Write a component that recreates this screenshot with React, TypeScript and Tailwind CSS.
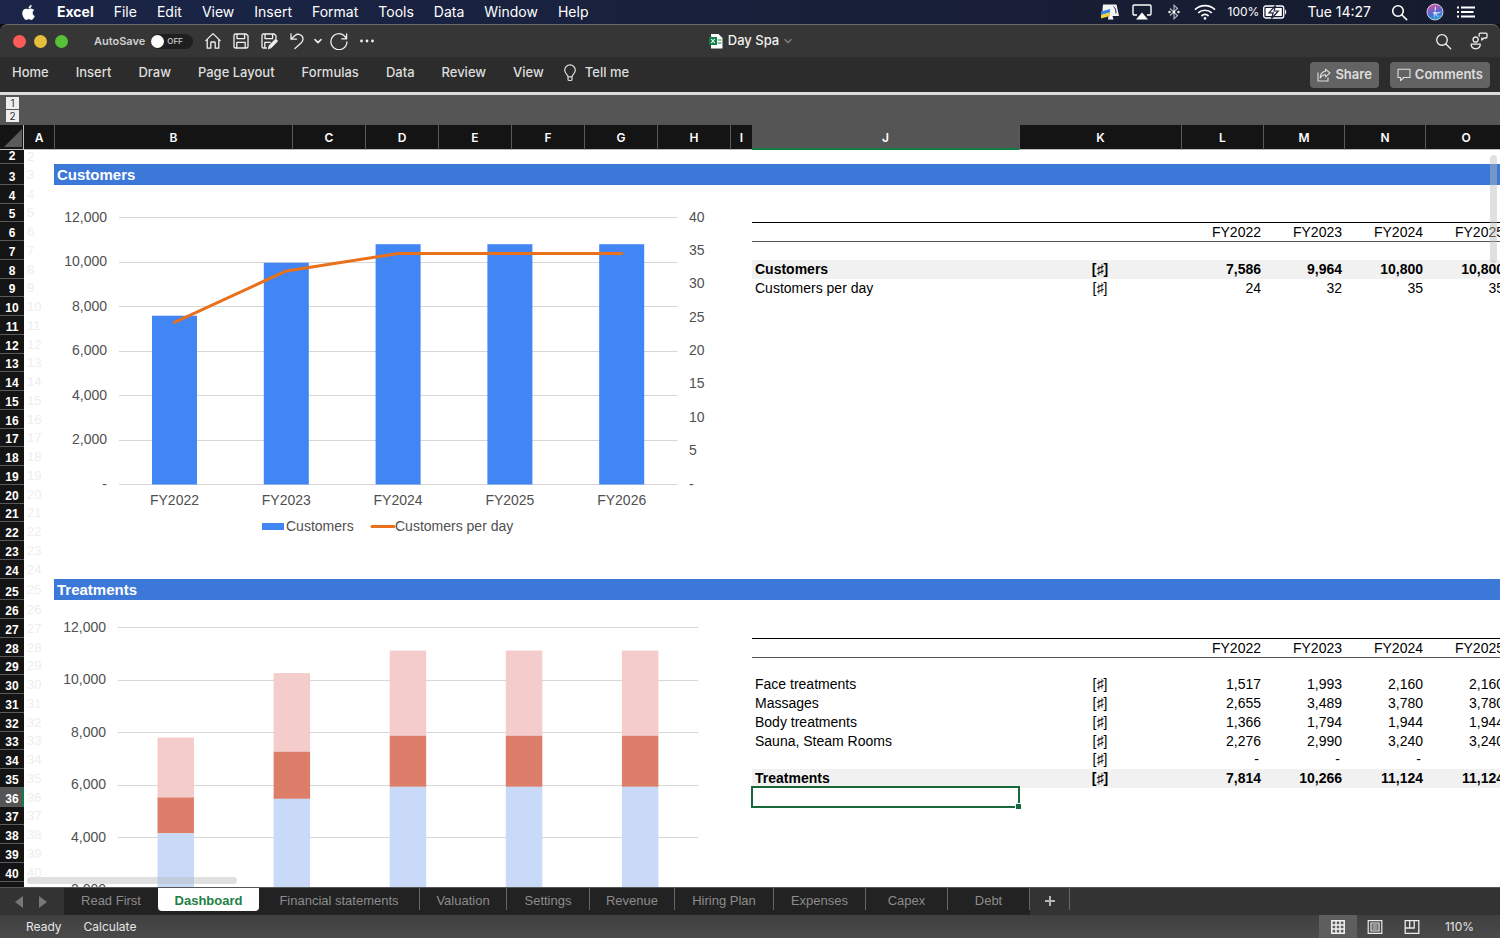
import { Fragment, type ReactNode } from "react";
import { FaApple } from "react-icons/fa";

const ui = "font-['Inter','Liberation_Sans',sans-serif]";

/* ---------- icons ---------- */

function Line({ children, className, size = 18, w = 1.3 }: { children: ReactNode; className?: string; size?: number; w?: number }) {
  return (
    <svg
      width={size}
      height={size}
      viewBox="0 0 18 18"
      fill="none"
      stroke="currentColor"
      strokeWidth={w}
      strokeLinecap="round"
      strokeLinejoin="round"
      className={className}
      aria-hidden="true"
    >
      {children}
    </svg>
  );
}

const HomeIcon = () => (
  <Line>
    <path d="M1.8 8.6 9 1.6l7.2 7M3.2 7.4v8.8h3.6v-5.4c0-.5.3-.8.8-.8h2.8c.5 0 .8.3.8.8v5.4h3.6V7.4" />
  </Line>
);
const SaveIcon = () => (
  <Line>
    <path d="M2 3.4C2 2.6 2.6 2 3.4 2h10.8L16 3.8v10.8c0 .8-.6 1.4-1.4 1.4H3.4c-.8 0-1.4-.6-1.4-1.4zM5 2v4.6h7.6V2M4.8 16v-5.6h8.4V16" />
  </Line>
);
const SaveEditIcon = () => (
  <Line>
    <path d="M6.4 16h-3C2.6 16 2 15.4 2 14.600V3.400C2 2.600 2.600 2 3.400 2h10.800L16 3.800V6.500M5 2v4.600h7.600V2M4.800 16v-5.600h5.400" />
    <path d="M8.400 16.600l.8-3.200 5.600-5.600c1.600-1.200 3.200.6 2.200 2l-5.600 5.800z" fill="currentColor" strokeWidth={0.8} />
  </Line>
);
const UndoIcon = () => (
  <Line>
    <path d="M3 1.800v5.400h5.400M3.300 6.900 7 3.500c3.200-2.600 8-.6 8 3.400 0 1.500-.6 2.700-1.700 3.800L7 16.500" />
  </Line>
);
const RedoIcon = () => (
  <Line>
    <path d="M16.600 2v4.800h-4.800M16.200 6.400a8 8 0 1 0 .7 3.600" />
  </Line>
);
const SearchIcon = ({ w = 1.4 }: { w?: number }) => (
  <Line size={17} w={w}>
    <circle cx="7.400" cy="7.400" r="5.600" />
    <path d="m11.600 11.600 5 5" />
  </Line>
);
const DotsIcon = () => (
  <svg width="18" height="18" viewBox="0 0 18 18" fill="currentColor" aria-hidden="true">
    <circle cx="3.500" cy="9" r="1.400" />
    <circle cx="9" cy="9" r="1.400" />
    <circle cx="14.500" cy="9" r="1.400" />
  </svg>
);
const Chevron = () => (
  <svg width="8" height="8" viewBox="0 0 8 8" fill="none" stroke="currentColor" strokeWidth="1.500" strokeLinecap="round" strokeLinejoin="round" aria-hidden="true">
    <path d="m1 2.600 3 3 3-3" />
  </svg>
);
const PeopleIcon = () => (
  <Line>
    <circle cx="5.600" cy="7.600" r="2.600" />
    <path d="M1.200 12.200h9c.3 2.800-1.500 4.600-4.500 4.600s-4.700-1.800-4.500-4.600zM9.200 4.200V2.200c0-.6.400-1 1-1h5.800c.6 0 1 .4 1 1v2.800c0 .6-.4 1-1 1h-1.800l-2.400 2V6" />
  </Line>
);
const BulbIcon = () => (
  <svg width="14" height="18" viewBox="0 0 14 18" fill="none" stroke="currentColor" strokeWidth="1.200" aria-hidden="true">
    <path d="M5 12.800c0-2-3.300-3.200-3.300-6.600a5.300 5.300 0 0 1 10.600 0c0 3.400-3.300 4.600-3.300 6.600zM5 12.800v2.400c0 .8.500 1.300 1.200 1.300h1.600c.7 0 1.200-.5 1.200-1.300v-2.400" />
  </svg>
);
const ShareIcon = () => (
  <svg width="14" height="14" viewBox="0 0 14 14" fill="none" stroke="currentColor" strokeWidth="1.100" strokeLinejoin="round" aria-hidden="true">
    <path d="M1 4.500V13h10V9.500" />
    <path d="M8.500 1.200 13 5 8.500 8.800V6.800C6.300 6.600 4.500 7.600 3.200 10c0-3.600 1.800-6.200 5.300-6.700z" />
  </svg>
);
const CommentIcon = () => (
  <svg width="14" height="14" viewBox="0 0 14 14" fill="none" stroke="currentColor" strokeWidth="1.100" strokeLinejoin="round" aria-hidden="true">
    <path d="M1 1.200h12v8.300H6.800L3.600 12.700V9.500H1z" />
  </svg>
);
const WorkbookIcon = () => (
  <svg width="14" height="16" viewBox="0 0 14 16" aria-hidden="true">
    <path d="M2 1h7.500L13.500 5v10.500H2z" fill="#fff" />
    <path d="M8.500 7h4M8.500 10h4" stroke="#1d8a4c" strokeWidth="1.200" />
    <rect x="0" y="4" width="8" height="8" fill="#16804a" />
    <path d="m2.300 6 3.400 4M5.700 6 2.300 10" stroke="#fff" strokeWidth="1.100" />
  </svg>
);
const MonitorIcon = () => (
  <svg width="20" height="18" viewBox="0 0 20 18" aria-hidden="true">
    <path d="M3 1.500h13.500l2.500 11.500h-6.500l1 3.500H8l.5-3.500H2z" fill="#f5f5f5" />
    <path d="M1 8.500 10 6v3.500L1 12z" fill="#3b82e0" />
    <path d="M1 12l9-2.500V13l-9 2.500z" fill="#f2cf3c" />
    <path d="M13.500 3.500c2 1.500 2.500 4 2.500 7" stroke="#1a203a" strokeWidth="1" fill="none" />
  </svg>
);
const AirplayIcon = () => (
  <svg width="20" height="16" viewBox="0 0 20 16" aria-hidden="true">
    <path d="M5 11H2.200C1.500 11 1 10.500 1 9.800V2.200C1 1.500 1.500 1 2.200 1h15.600c.7 0 1.200.5 1.200 1.200v7.600c0 .7-.5 1.200-1.200 1.200H15" fill="none" stroke="#fff" strokeWidth="1.400" />
    <path d="m10 8.500 6 7H4z" fill="#fff" />
  </svg>
);
const BluetoothIcon = () => (
  <svg width="12" height="16" viewBox="0 0 12 16" aria-hidden="true">
    <path d="m2 4.500 7.500 7L6 14.800V1.200l3.500 3.300-7.500 7" fill="none" stroke="#b9bdc9" strokeWidth="1.100" />
    <circle cx="1.500" cy="8" r="1.200" fill="#fff" />
    <circle cx="6" cy="8" r="1.200" fill="#fff" />
    <circle cx="10.500" cy="8" r="1.200" fill="#fff" />
  </svg>
);
const WifiIcon = () => (
  <svg width="22" height="16" viewBox="0 0 22 16" fill="none" stroke="#fff" strokeWidth="1.700" aria-hidden="true">
    <path d="M1 5.600a14.500 14.500 0 0 1 20 0M4.200 8.900a10 10 0 0 1 13.600 0M7.400 12a5.600 5.600 0 0 1 7.200 0" />
    <circle cx="11" cy="14.400" r="1.300" fill="#fff" stroke="none" />
  </svg>
);
const BatteryIcon = () => (
  <svg width="24" height="14" viewBox="0 0 24 14" aria-hidden="true">
    <rect x="0.700" y="1" width="20" height="12" rx="2" fill="none" stroke="#fff" strokeWidth="1.300" />
    <rect x="2.600" y="3" width="16.200" height="8" fill="#fff" />
    <path d="M22 4.500c1.600.5 1.600 4.500 0 5z" fill="#fff" />
    <path d="M12.500.5 6 7.800h4.200L8.500 13.500 15.300 6h-4.200z" fill="#fff" stroke="#1a203a" strokeWidth="1.200" />
  </svg>
);
const SiriIcon = () => (
  <svg width="18" height="18" viewBox="0 0 18 18" aria-hidden="true">
    <defs>
      <linearGradient id="siri" x1="0.300" y1="0" x2="0.600" y2="1">
        <stop offset="0" stopColor="#e0559f" />
        <stop offset="0.500" stopColor="#5a62d0" />
        <stop offset="1" stopColor="#24a8d8" />
      </linearGradient>
    </defs>
    <circle cx="9" cy="9" r="8" fill="url(#siri)" stroke="#d5d6e6" strokeWidth="0.900" />
    <path d="M2.500 8.500c3 1.500 4.500 0 6.500.5s3.500 1 6.500-1c-2 3-4 2.500-5 2.500s1 2.500 2.500 3.500c-2.500-.5-3.500-2.500-4-3.500s-.5 2.500 0 4.500c-1.500-2-1-4-1.500-5s-3 0-5-1.500zM9.500 3c-.8 2-1 4-.5 6 1-1.500 1.300-4 .5-6z" fill="#fff" opacity="0.900" />
  </svg>
);
const ListIcon = () => (
  <svg width="20" height="14" viewBox="0 0 20 14" fill="#fff" aria-hidden="true">
    <path d="M1 1.500h2v2H1zM1 6h2v2H1zM1 10.500h2v2H1zM5 1.500h14v2H5zM5 6h12.500v2H5zM5 10.500h14v2H5z" />
  </svg>
);
const GridViewIcon = () => (
  <svg width="14" height="14" viewBox="0 0 14 14" fill="none" stroke="#f2f2f2" strokeWidth="1.500" aria-hidden="true">
    <path d="M.8.800h12.400v12.400H.8zM5 .8v12.400M9 .8v12.400M.8 5h12.400M.8 9h12.400" />
  </svg>
);
const PageViewIcon = () => (
  <svg width="16" height="14" viewBox="0 0 16 14" fill="none" stroke="#eaeaea" strokeWidth="1.200" aria-hidden="true">
    <path d="M1.200.7h13.600v12.600H1.200zM4 3h8v8H4zM5.500 5h5M5.500 7h5M5.500 9h5" />
  </svg>
);
const BreakViewIcon = () => (
  <svg width="16" height="14" viewBox="0 0 16 14" fill="none" stroke="#eaeaea" strokeWidth="1.300" aria-hidden="true">
    <path d="M1.200.7h13.600v12.600H1.200zM1.200 8h9V.7M5.700.7V8" />
  </svg>
);

/* ---------- bars above the sheet ---------- */

const menus = ["File", "Edit", "View", "Insert", "Format", "Tools", "Data", "Window", "Help"];

function MenuBar() {
  return (
    <header className="flex h-6 shrink-0 items-center bg-linear-to-r from-[#1a2548] to-[#161b2d] pr-6 pl-5 text-sm text-white">
      <nav className="flex items-center gap-5" aria-label="Menu bar">
        <button aria-label="Apple menu"><FaApple size={17} /></button>
        <button className="font-bold">Excel</button>
        {menus.map((m) => <button key={m}>{m}</button>)}
      </nav>
      <div className="ml-auto flex items-center">
        <MonitorIcon />
        <span className="ml-3"><AirplayIcon /></span>
        <span className="ml-4"><BluetoothIcon /></span>
        <span className="ml-[14px]"><WifiIcon /></span>
        <span className="ml-3 text-xs">100%</span>
        <span className="ml-1"><BatteryIcon /></span>
        <span className="ml-5">Tue 14:27</span>
        <button className="ml-5" aria-label="Spotlight"><SearchIcon w={1.7} /></button>
        <button className="ml-[18px]" aria-label="Siri"><SiriIcon /></button>
        <button className="ml-3" aria-label="Notification Center"><ListIcon /></button>
      </div>
    </header>
  );
}

function TitleBar() {
  return (
    <div className="flex h-[33px] shrink-0 items-center rounded-t-lg border-t border-[#6b6b6b] bg-[#363636] text-[#f0f0f0]">
      <div className="flex flex-1 items-center pl-[13px]">
        <div className="flex gap-2">
          <button aria-label="Close" className="size-[13px] rounded-full bg-[#fc5b57]" />
          <button aria-label="Minimize" className="size-[13px] rounded-full bg-[#e5bf3c]" />
          <button aria-label="Zoom" className="size-[13px] rounded-full bg-[#57c038]" />
        </div>
        <label className="relative ml-[26px] flex items-center gap-1.5 text-[11px] font-semibold text-[#cfcfcf]">
          AutoSave
          <input type="checkbox" className="sr-only" />
          <span className="flex h-[15px] w-[42px] items-center gap-[3px] rounded-full bg-[#1f1f1f] text-[8px] text-[#bdbdbd]">
            <span className="size-[13px] rounded-full bg-white" />
            OFF
          </span>
        </label>
        <div className="ml-[11px] flex items-center gap-2.5">
          <button aria-label="Home"><HomeIcon /></button>
          <button aria-label="Save"><SaveIcon /></button>
          <button aria-label="Save as"><SaveEditIcon /></button>
          <span className="flex items-center gap-2">
            <button aria-label="Undo"><UndoIcon /></button>
            <button aria-label="Undo history"><Chevron /></button>
            <button aria-label="Redo"><RedoIcon /></button>
          </span>
          <button aria-label="More"><DotsIcon /></button>
        </div>
      </div>
      <button className="flex items-center gap-[5px] text-[13px] font-medium">
        <WorkbookIcon />
        Day Spa
        <span className="text-[#777]"><Chevron /></span>
      </button>
      <div className="flex flex-1 items-center justify-end gap-[18px] pr-3">
        <button aria-label="Search"><SearchIcon /></button>
        <button aria-label="Account"><PeopleIcon /></button>
      </div>
    </div>
  );
}

const ribbon = ["Home", "Insert", "Draw", "Page Layout", "Formulas", "Data", "Review", "View"];

function Ribbon() {
  return (
    <div className="flex h-[35px] shrink-0 items-center bg-[#2c2c2c] pr-[10px] pl-3 text-[#dedede]">
      <nav className="flex items-center gap-[27px] pb-1 text-[13px] font-medium" aria-label="Ribbon">
        {ribbon.map((t) => <button key={t}>{t}</button>)}
        <button className="-ml-2 flex items-center gap-2"><BulbIcon />Tell me</button>
      </nav>
      <div className="ml-auto flex gap-[11px] text-[13px] font-semibold">
        <button className="flex h-[26px] items-center gap-1 rounded bg-[#636363] px-[7px]"><ShareIcon />Share</button>
        <button className="flex h-[26px] items-center gap-1 rounded bg-[#636363] px-[7px]"><CommentIcon />Comments</button>
      </div>
    </div>
  );
}

function OutlineBar() {
  return (
    <div className="flex h-[33px] shrink-0 flex-col items-start gap-px border-t-3 border-[#dcdcdc] bg-[#555] pt-[2px] pl-[6px] text-[10px] text-[#333]">
      <button className="h-3 w-[13px] bg-[#efefef] leading-3">1</button>
      <button className="h-3 w-[13px] bg-[#efefef] leading-3">2</button>
    </div>
  );
}

/* ---------- sheet ---------- */

const columns = [
  { name: "A", width: "w-[30px]" },
  { name: "B", width: "w-[238px]" },
  { name: "C", width: "w-[73px]" },
  { name: "D", width: "w-[73px]" },
  { name: "E", width: "w-[73px]" },
  { name: "F", width: "w-[73px]" },
  { name: "G", width: "w-[73px]" },
  { name: "H", width: "w-[73px]" },
  { name: "I", width: "w-[22px]" },
  { name: "J", width: "w-[267px]" },
  { name: "K", width: "w-[162px]" },
  { name: "L", width: "w-[82px]" },
  { name: "M", width: "w-[81px]" },
  { name: "N", width: "w-[81px]" },
  { name: "O", width: "w-[81px]" },
];

type Row = { title?: string; cells?: string[]; look?: "head" | "rule" | "total" | "selected" };

const years = ["", "", "FY2022", "FY2023", "FY2024", "FY2025"];
const rows: Record<number, Row> = {
  3: { title: "Customers" },
  6: { cells: years, look: "head" },
  7: { look: "rule" },
  8: { cells: ["Customers", "[♯]", "7,586", "9,964", "10,800", "10,800"], look: "total" },
  9: { cells: ["Customers per day", "[♯]", "24", "32", "35", "35"] },
  25: { title: "Treatments" },
  28: { cells: years, look: "head" },
  29: { look: "rule" },
  30: { cells: ["Face treatments", "[♯]", "1,517", "1,993", "2,160", "2,160"] },
  31: { cells: ["Massages", "[♯]", "2,655", "3,489", "3,780", "3,780"] },
  32: { cells: ["Body treatments", "[♯]", "1,366", "1,794", "1,944", "1,944"] },
  33: { cells: ["Sauna, Steam Rooms", "[♯]", "2,276", "2,990", "3,240", "3,240"] },
  34: { cells: ["", "[♯]", "-", "-", "-", ""] },
  35: { cells: ["Treatments", "[♯]", "7,814", "10,266", "11,124", "11,124"], look: "total" },
  36: { look: "selected" },
};

const rowLook = {
  head: "border-t border-black",
  rule: "border-t border-[#555]",
  total: "bg-[#f1f1f1] font-bold",
  selected: "",
};

function rowHeight(n: number) {
  if (n === 2) return "h-[14px]";
  if (rows[n]?.title) return "h-[21px]";
  return n % 4 === 1 ? "h-[18px]" : "h-[19px]";
}

function SheetRow({ n }: { n: number }) {
  const row = rows[n] ?? {};
  const active = row.look === "selected";
  const cells = row.cells ?? ["", "", "", "", "", ""];
  const look = row.look ? rowLook[row.look] : "";
  return (
    <tr className={rowHeight(n)}>
      <th
        scope="row"
        className={`border-b border-[#5a5a5a] p-0 align-bottom text-xs leading-[13px] font-bold text-white ${active ? "border-r-2 border-r-[#107c41] bg-[#555] pl-[2px]" : "bg-[#141414]"}`}
      >
        {n}
      </th>
      <td className="p-0 pl-[3px] text-[13px] leading-[14px] text-[#eeeeee]">{n}</td>
      {row.title ? (
        <td colSpan={15} className="bg-[#3c78d8] p-0 pl-[3px] text-[15px] leading-[18px] font-bold text-white">{row.title}</td>
      ) : (
        <Fragment>
          <td colSpan={8} className="p-0" />
          {cells.map((c, i) => (
            <td
              key={i}
              className={`p-0 text-sm leading-[17px] whitespace-nowrap ${i === 0 ? "pl-[3px]" : i === 1 ? "text-center" : "pr-[2px] text-right"} ${active && i === 0 ? "relative" : ""} ${look}`}
            >
              {c === "-" ? <span className="pr-[2px]">-</span> : c}
              {active && i === 0 && (
                <div className="absolute -inset-x-px -top-[2px] -bottom-px border-2 border-[#17693a]">
                  <div className="absolute -right-[3px] -bottom-[3px] size-[6px] border-t border-l border-white bg-[#17693a]" />
                </div>
              )}
            </td>
          ))}
          <td className={`p-0 ${look}`} />
        </Fragment>
      )}
    </tr>
  );
}

/* ---------- charts ---------- */

const fiscal = ["FY2022", "FY2023", "FY2024", "FY2025", "FY2026"];
const fmt = (v: number) => (v === 0 ? "-" : v.toLocaleString("en-US"));

function CustomersChart() {
  const customers = [7586, 9964, 10800, 10800, 10800];
  const perDay = [24.3, 32, 34.6, 34.6, 34.6];
  const y = (v: number) => 298.5 - (v / 12000) * 267;
  const x = (i: number) => 120.5 + i * 111.8;
  return (
    <svg className="absolute top-[61px] left-[54px] font-['Liberation_Sans',Arial,sans-serif]" width="676" height="370" viewBox="0 0 676 370" fontSize="14" fill="#505050" role="img" aria-label="Customers and customers per day">
      {[0, 2000, 4000, 6000, 8000, 10000, 12000].map((v) => (
        <g key={v}>
          <path d={`M65 ${Math.round(y(v) - 0.5) + 0.5}H623.5`} stroke="#d6d6d6" />
          <text x="53" y={Math.round(y(v)) + 4} textAnchor="end">{fmt(v)}</text>
        </g>
      ))}
      {[0, 5, 10, 15, 20, 25, 30, 35, 40].map((v) => (
        <text key={v} x="635" y={Math.round(y(v * 300)) + 4}>{fmt(v)}</text>
      ))}
      {customers.map((v, i) => (
        <g key={i}>
          <rect x={x(i) - 22.5} y={y(v)} width="45" height={y(0) - y(v)} fill="#4285f4" />
          <text x={x(i)} y="319" textAnchor="middle">{fiscal[i]}</text>
        </g>
      ))}
      <polyline points={perDay.map((v, i) => `${x(i)},${y(v * 300)}`).join(" ")} fill="none" stroke="#e8711c" strokeWidth="3" strokeLinecap="round" strokeLinejoin="round" />
      <rect x="208" y="337" width="22" height="7" fill="#4285f4" />
      <text x="232" y="345">Customers</text>
      <path d="M318 340.500h22" stroke="#e8711c" strokeWidth="3" strokeLinecap="round" />
      <text x="341" y="345">Customers per day</text>
    </svg>
  );
}

function TreatmentsChart() {
  const stacks = [
    [4172, 5538, 7814],
    [5482, 7276, 10266],
    [5940, 7884, 11124],
    [5940, 7884, 11124],
    [5940, 7884, 11124],
  ];
  const y = (v: number) => 342 - (v / 12000) * 315.5;
  const x = (i: number) => 103.5 + i * 116.1;
  return (
    <svg className="absolute top-[476px] left-[54px] font-['Liberation_Sans',Arial,sans-serif]" width="676" height="370" viewBox="0 0 676 370" fontSize="14" fill="#505050" role="img" aria-label="Treatments by type">
      {[0, 2000, 4000, 6000, 8000, 10000, 12000].map((v) => (
        <g key={v}>
          <path d={`M64 ${Math.round(y(v) - 0.5) + 0.5}H644`} stroke="#d6d6d6" />
          <text x="52" y={Math.round(y(v)) + 4} textAnchor="end">{fmt(v)}</text>
        </g>
      ))}
      {stacks.map(([a, b, c], i) => (
        <g key={i}>
          <rect x={x(i)} y={y(c)} width="36.500" height={y(b) - y(c)} fill="#f4cccc" />
          <rect x={x(i)} y={y(b)} width="36.500" height={y(a) - y(b)} fill="#dd7e6b" />
          <rect x={x(i)} y={y(a)} width="36.500" height={y(0) - y(a)} fill="#c9daf8" />
        </g>
      ))}
    </svg>
  );
}

function Sheet() {
  return (
    <main className="relative min-h-0 flex-1 overflow-hidden bg-white font-['Liberation_Sans',Arial,'DejaVu_Sans',sans-serif] text-black">
      <table className="w-full table-fixed border-separate border-spacing-0">
        <colgroup>
          <col className="w-6" />
          {columns.map((c) => <col key={c.name} className={c.width} />)}
          <col />
        </colgroup>
        <thead>
          <tr className={`h-[25px] text-xs text-white ${ui}`}>
            <td className="border-r border-b border-[#bdbdbd] bg-[#141414] p-0">
              <svg width="22" height="22" viewBox="0 0 22 22" aria-hidden="true"><path d="M22 3v18H4z" fill="#5a5a5a" /></svg>
            </td>
            {columns.map((c) => (
              <th
                key={c.name}
                scope="col"
                className={`p-0 pt-[2px] font-semibold ${c.name === "J" ? "border-b-2 border-b-[#107c41] bg-[#555]" : "border-b border-b-[#bdbdbd] bg-[#141414]"} ${c.name === "A" || c.name === "J" ? "" : "border-l border-l-[#5a5a5a]"}`}
              >
                {c.name}
              </th>
            ))}
            <td className="border-b border-[#bdbdbd] bg-[#141414] p-0" />
          </tr>
        </thead>
        <tbody>
          {Array.from({ length: 40 }, (_, i) => <SheetRow key={i} n={i + 2} />)}
        </tbody>
      </table>
      <CustomersChart />
      <TreatmentsChart />
      <div className="absolute top-[30px] right-[3px] h-[108px] w-[7px] rounded-full bg-[#bbb]/45" />
      <div className="absolute bottom-[3px] left-[27px] h-[7px] w-[210px] rounded-full bg-[#bbb]/45" />
    </main>
  );
}

/* ---------- bars below the sheet ---------- */

const tabs = [
  { name: "Read First", width: "w-[94px]" },
  { name: "Dashboard", width: "w-[101px]", active: true },
  { name: "Financial statements", width: "w-[161px]" },
  { name: "Valuation", width: "w-[87px]" },
  { name: "Settings", width: "w-[83px]" },
  { name: "Revenue", width: "w-[85px]" },
  { name: "Hiring Plan", width: "w-[99px]" },
  { name: "Expenses", width: "w-[92px]" },
  { name: "Capex", width: "w-[82px]" },
  { name: "Debt", width: "w-[82px]" },
];

function SheetTabs() {
  return (
    <nav className="flex h-7 shrink-0 items-start border-t border-[#555] bg-[#333] font-['Liberation_Sans',Arial,sans-serif] text-[13px] text-[#8c8c8c]" aria-label="Sheets">
      <div className="flex h-full w-16 items-center gap-4 pl-[15px]">
        <button aria-label="Previous sheets"><svg width="8" height="12" viewBox="0 0 8 12" fill="#777"><path d="M8 0v12L0 6z" /></svg></button>
        <button aria-label="Next sheets"><svg width="8" height="12" viewBox="0 0 8 12" fill="#777"><path d="M0 0v12l8-6z" /></svg></button>
      </div>
      <div className="flex h-full items-start bg-[#222]">
        {tabs.map((t, i) => (
          <button
            key={t.name}
            className={`${t.width} ${t.active ? "h-[23px] rounded-b-sm bg-white pt-[2px] font-bold text-[#1d7f46]" : `h-[22px] pt-[3px] ${i > 1 ? "border-r border-[#666]" : ""}`}`}
          >
            {t.name}
          </button>
        ))}
      </div>
      <button aria-label="Add sheet" className="flex h-[22px] w-10 items-center justify-center border-r border-[#666] pt-1">
        <svg width="10" height="10" viewBox="0 0 10 10" stroke="#b5b5b5" strokeWidth="2"><path d="M5 0v10M0 5h10" /></svg>
      </button>
    </nav>
  );
}

function StatusBar() {
  return (
    <footer className="flex h-[23px] shrink-0 items-center bg-linear-to-b from-[#404040] to-[#4a4a4a] px-[26px] text-xs text-[#e6e6e6]">
      <span>Ready</span>
      <span className="ml-[22px]">Calculate</span>
      <div className="ml-auto flex h-full items-center">
        <button aria-label="Normal view" className="flex h-full w-[38px] items-center justify-center bg-[#5e5e5e]"><GridViewIcon /></button>
        <button aria-label="Page layout view" className="flex w-[37px] justify-center"><PageViewIcon /></button>
        <button aria-label="Page break preview" className="flex w-[37px] justify-center"><BreakViewIcon /></button>
        <span className="ml-[14px]">110%</span>
      </div>
    </footer>
  );
}

export default function App() {
  return (
    <div className={`flex h-screen flex-col overflow-hidden bg-[#0c0f1a] ${ui}`}>
      <MenuBar />
      <TitleBar />
      <Ribbon />
      <OutlineBar />
      <Sheet />
      <SheetTabs />
      <StatusBar />
    </div>
  );
}
